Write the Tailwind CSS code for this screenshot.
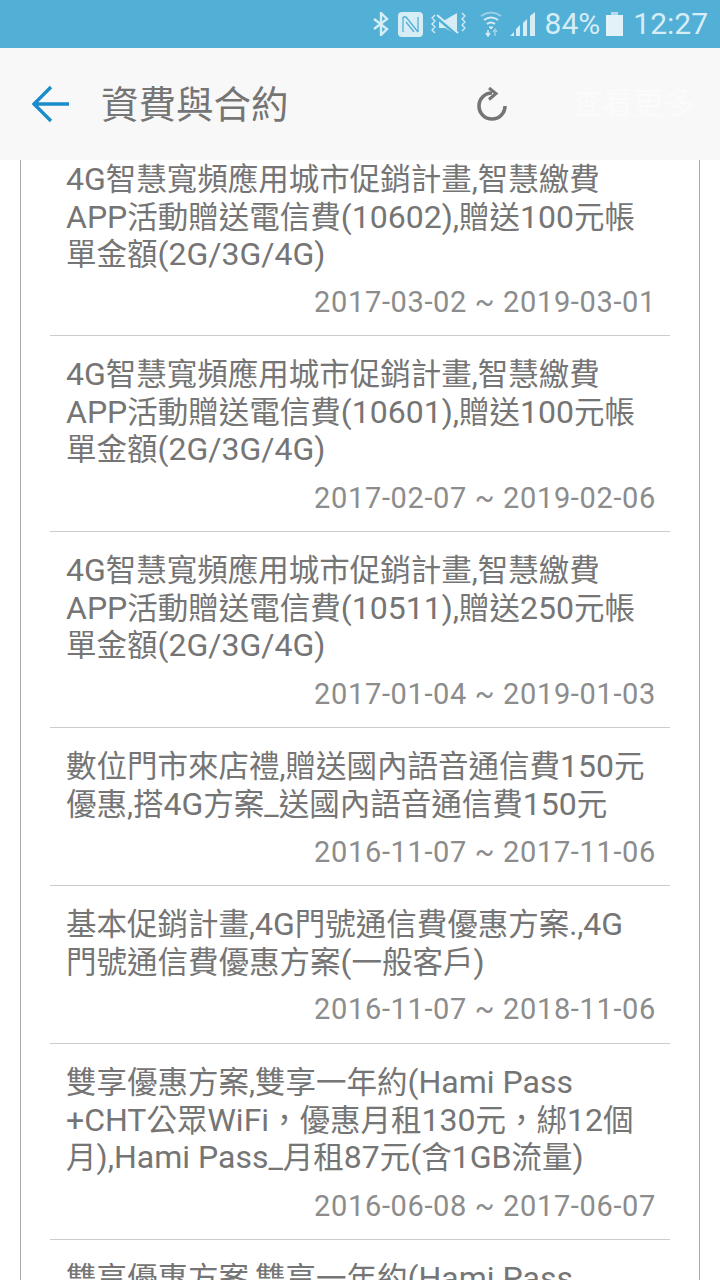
<!DOCTYPE html>
<html lang="zh-Hant">
<head>
  <meta charset="UTF-8" />
  <meta name="viewport" content="width=device-width, initial-scale=1.0"/>
  <title>資費與合約</title>
  <script src="https://cdn.jsdelivr.net/npm/@tailwindcss/browser@4"></script>
</head>
<body class="bg-white font-['Roboto','Noto_Sans_CJK_TC',sans-serif]">
<div class="w-[720px] h-[1280px] flex flex-col overflow-hidden">

  <!-- Status bar -->
  <div class="h-12 shrink-0 bg-[#52afd6] flex items-center justify-end pr-3 text-[#d6edf6]">
    <svg class="w-[18px] h-6 mr-[8px]" viewBox="0 0 18 24" fill="none" stroke="currentColor" stroke-width="2.4"><path d="M2 7l13 10-6 6V1l6 6L2 17"/></svg>
    <svg class="w-[25px] h-[25px] mr-[8px]" viewBox="0 0 25 25" fill="none" stroke="#52afd6" stroke-width="1.300"><rect width="25" height="25" rx="4" fill="currentColor" stroke="none"/><path d="M5 5v15M20 5v15M5 5h3l12 15M8 10l8 10"/></svg>
    <svg class="w-[35px] h-6 mr-[14px]" viewBox="0 0 35 24" fill="none" stroke="currentColor" stroke-width="1.300"><path d="M4 3L1 6l3 3-3 3 3 3-3 3 3 3M31 1l3 3-3 3 3 3-3 3 3 3-3 3"/><path d="M8 8h6L26 1v22l-12-7H8z" fill="currentColor" stroke="none"/><path d="M6 5l21 18" stroke="#52afd6" stroke-width="4"/><path d="M6 3l21 18" stroke-width="2"/></svg>
    <svg class="w-[22px] h-[26px] mr-[8px]" viewBox="0 0 22 26" fill="none" stroke="currentColor"><path d="M1 5q10-7 20 0" stroke-width="2" opacity=".55"/><path d="M4 9q7-5 14 0" stroke-width="2"/><path d="M7 13q4-3 8 0" stroke-width="2"/><path d="M9 16h4l-2 2z" fill="currentColor"/><path d="M8 19v5M6 22l2 3 2-3" stroke-width="1.500"/><path d="M15 25v-6M13 21l2-3 2 3" stroke-width="1.500" opacity=".55"/></svg>
    <svg class="w-[25px] h-6 mr-[10px]" viewBox="0 0 25 24" fill="currentColor"><path d="M0 24l4-4v4zM6 24v-7l4-4v11zM13 24V11l4-4v17zM20 24V4l5-4v24z"/></svg>
    <span class="text-[30px] leading-none">84%</span>
    <svg class="w-[17px] h-6 ml-[6px] mr-[10px]" viewBox="0 0 17 24"><path d="M5 0h7v3H5z" fill="#b5dcec"/><path d="M0 3h17v21H0z" fill="#e3f2f9"/></svg>
    <span class="text-[30px] leading-none">12:27</span>
  </div>

  <!-- Header -->
  <div class="h-28 shrink-0 bg-[#f8f8f8] flex items-center">
    <svg class="w-[38px] h-[38px] ml-[31px] shrink-0" viewBox="0 0 38 38" fill="none" stroke="#1b8dcb" stroke-width="3.400"><path d="M38 19H3M20 2L3 19l17 17"/></svg>
    <h1 class="ml-[32px] mt-1 text-[37.5px] leading-none text-[#757575] w-[376px] whitespace-nowrap">資費與合約</h1>
    <svg class="w-[32px] h-[36px] shrink-0 mt-[2px]" viewBox="0 0 32 36" fill="none" stroke="#757575" stroke-width="3.600"><path d="M28 19a13 13 0 1 1-13-13"/><path d="M12 1l7 5.500-7 6" stroke-width="3"/></svg>
    <span class="ml-[62px] text-[31px] text-[#fbfbfb] whitespace-nowrap">查看更多</span>
  </div>

  <!-- List -->
  <div class="flex-1 overflow-hidden">
    <div class="mx-5 px-[29px] border-x border-[#aaaaaa] w-[680px] h-full">
      <div class="pl-4 pr-[14px] pt-px h-[176px] border-b border-[#cccccc]">
        <p class="text-[30.5px] leading-[36.5px] text-[#757575] whitespace-nowrap"><span class="text-[32px]">4G</span>智慧寬頻應用城市促銷計畫,智慧繳費<br><span class="text-[32px]">APP</span>活動贈送電信費<span class="text-[32px]">(10602),</span>贈送<span class="text-[32px]">100</span>元帳<br>單金額<span class="text-[32px]">(2G/3G/4G)</span></p>
        <p class="mt-[9px] text-[29px] tracking-[0.65px] leading-[38px] text-[#8c8c8c] text-right">2017-03-02 ~ 2019-03-01</p>
      </div>
      <div class="pl-4 pr-[14px] pt-5 h-[196px] border-b border-[#cccccc]">
        <p class="text-[30.5px] leading-[36.5px] text-[#757575] whitespace-nowrap"><span class="text-[32px]">4G</span>智慧寬頻應用城市促銷計畫,智慧繳費<br><span class="text-[32px]">APP</span>活動贈送電信費<span class="text-[32px]">(10601),</span>贈送<span class="text-[32px]">100</span>元帳<br>單金額<span class="text-[32px]">(2G/3G/4G)</span></p>
        <p class="mt-[10px] text-[29px] tracking-[0.65px] leading-[38px] text-[#8c8c8c] text-right">2017-02-07 ~ 2019-02-06</p>
      </div>
      <div class="pl-4 pr-[14px] pt-5 h-[196px] border-b border-[#cccccc]">
        <p class="text-[30.5px] leading-[36.5px] text-[#757575] whitespace-nowrap"><span class="text-[32px]">4G</span>智慧寬頻應用城市促銷計畫,智慧繳費<br><span class="text-[32px]">APP</span>活動贈送電信費<span class="text-[32px]">(10511),</span>贈送<span class="text-[32px]">250</span>元帳<br>單金額<span class="text-[32px]">(2G/3G/4G)</span></p>
        <p class="mt-[10px] text-[29px] tracking-[0.65px] leading-[38px] text-[#8c8c8c] text-right">2017-01-04 ~ 2019-01-03</p>
      </div>
      <div class="pl-4 pr-[14px] pt-5 h-[158px] border-b border-[#cccccc]">
        <p class="text-[30.5px] leading-[36.5px] text-[#757575] whitespace-nowrap">數位門市來店禮,贈送國內語音通信費<span class="text-[32px]">150</span>元<br>優惠,搭<span class="text-[32px]">4G</span>方案<span class="text-[32px]">_</span>送國內語音通信費<span class="text-[32px]">150</span>元</p>
        <p class="mt-[10px] text-[29px] tracking-[0.65px] leading-[38px] text-[#8c8c8c] text-right">2016-11-07 ~ 2017-11-06</p>
      </div>
      <div class="pl-4 pr-[14px] pt-5 h-[158px] border-b border-[#cccccc]">
        <p class="text-[30.5px] leading-[36.5px] text-[#757575] whitespace-nowrap">基本促銷計畫,<span class="text-[32px]">4G</span>門號通信費優惠方案.,<span class="text-[32px]">4G</span><br>門號通信費優惠方案<span class="text-[32px]">(</span>一般客戶<span class="text-[32px]">)</span></p>
        <p class="mt-[9px] text-[29px] tracking-[0.65px] leading-[38px] text-[#8c8c8c] text-right">2016-11-07 ~ 2018-11-06</p>
      </div>
      <div class="pl-4 pr-[14px] pt-5 h-[196px] border-b border-[#cccccc]">
        <p class="text-[30.5px] leading-[37.5px] text-[#757575] whitespace-nowrap">雙享優惠方案,雙享一年約<span class="text-[32px]">(Hami Pass</span><br><span class="text-[32px]">+CHT</span>公眾<span class="text-[32px]">WiFi</span>&#65292;優惠月租<span class="text-[32px]">130</span>元&#65292;綁<span class="text-[32px]">12</span>個<br>月<span class="text-[32px]">),Hami Pass_</span>月租<span class="text-[32px]">87</span>元<span class="text-[32px]">(</span>含<span class="text-[32px]">1GB</span>流量<span class="text-[32px]">)</span></p>
        <p class="mt-[10px] text-[29px] tracking-[0.65px] leading-[38px] text-[#8c8c8c] text-right">2016-06-08 ~ 2017-06-07</p>
      </div>
      <div class="pl-4 pr-[14px] pt-5">
        <p class="text-[30.5px] leading-[37.5px] text-[#757575] whitespace-nowrap">雙享優惠方案,雙享一年約<span class="text-[32px]">(Hami Pass</span></p>
      </div>
    </div>
  </div>
</div>
</body>
</html>
